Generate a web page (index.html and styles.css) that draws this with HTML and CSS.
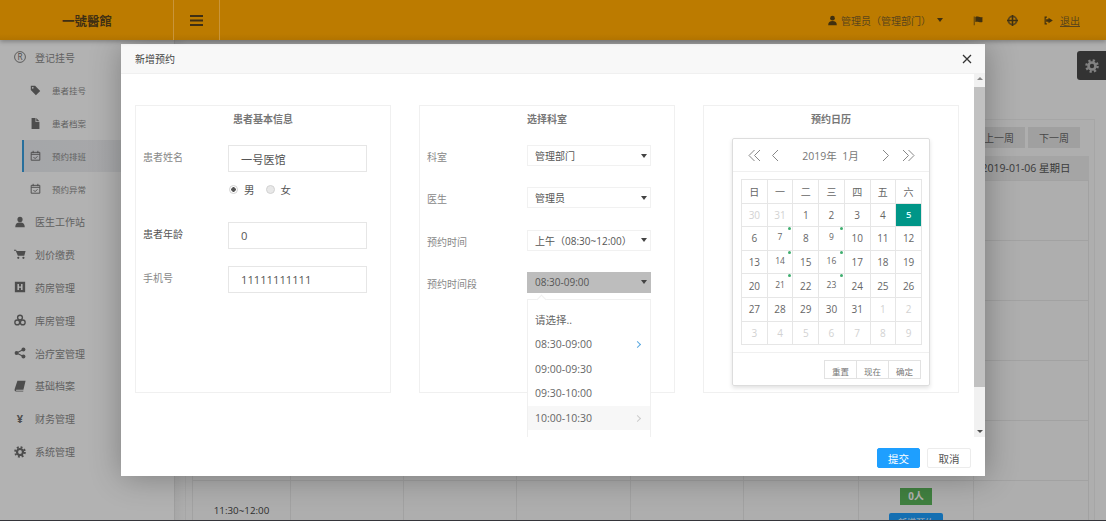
FILE: index.html
```html
<!DOCTYPE html>
<html lang="zh-CN">
<head>
    <meta charset="UTF-8">
    <title>一號醫館</title>
    <link rel="stylesheet" href="styles.css">
</head>
<body>
    <svg class="icon-defs" width="0" height="0">
        <symbol id="i-tag" viewBox="0 0 14 14"><path fill-rule="evenodd" d="M1 1h5.500L13 7.500 7.500 13 1 6.500zM3.500 2.500a1 1 0 1 0 .01 0z"/></symbol>
        <symbol id="i-file" viewBox="0 0 14 14"><path d="M2 0h5v5h5v9H2zM8 0l4 4H8z"/></symbol>
        <symbol id="i-cal" viewBox="0 0 14 14"><path fill="none" stroke="currentColor" stroke-width="1.200" d="M1.500 3h11v10h-11zM1.500 5.500h11M4 1v3M10 1v3M4.500 9l2 2 3-3"/></symbol>
        <symbol id="i-doc" viewBox="0 0 14 14"><circle cx="7" cy="4" r="3"/><path d="M1.500 13c0-4 2-5.500 5.500-5.500s5.500 1.500 5.500 5.500z"/></symbol>
        <symbol id="i-cart" viewBox="0 0 14 14"><path d="M0 2h2.500l.5 1.500h10.500L12 9H4.500L2 3.200H0z"/><circle cx="5" cy="11.500" r="1.300"/><circle cx="11" cy="11.500" r="1.300"/></symbol>
        <symbol id="i-h" viewBox="0 0 14 14"><path fill-rule="evenodd" d="M1 1h12v12H1zM4 3.500v7h1.800V8h2.400v2.500H10v-7H8.200v3H5.800v-3z"/></symbol>
        <symbol id="i-cubes" viewBox="0 0 14 14"><g fill="none" stroke="currentColor" stroke-width="1.600"><circle cx="7" cy="4.200" r="2.800"/><circle cx="3.800" cy="9.800" r="2.800"/><circle cx="10.200" cy="9.800" r="2.800"/></g></symbol>
        <symbol id="i-share" viewBox="0 0 14 14"><circle cx="3" cy="7" r="2.300"/><circle cx="11" cy="3" r="2.300"/><circle cx="11" cy="11" r="2.300"/><path fill="none" stroke="currentColor" stroke-width="1.300" d="M11 3 3 7l8 4"/></symbol>
        <symbol id="i-book" viewBox="0 0 14 14"><path d="M4 1h9.500L11 11.500H2.800c-.8 0-.8 1 0 1H11l-.3 1H2.500C.8 13.500.4 12 .8 10.500z"/></symbol>
        <symbol id="i-gear" viewBox="0 0 14 14"><circle cx="7" cy="7" r="3.500" fill="none" stroke="currentColor" stroke-width="2.600"/><circle cx="7" cy="7" r="5.600" fill="none" stroke="currentColor" stroke-width="2.400" stroke-dasharray="2.200 2.200"/></symbol>
    </svg>

    <div class="app">
        <header class="topbar">
            <div class="brand">一號醫館</div>
            <div class="menu-toggle">
                <svg width="13" height="11" viewBox="0 0 13 11"><path d="M0 0h13v2H0zM0 4.500h13v2H0zM0 9h13v2H0z"/></svg>
            </div>
            <nav class="top-links">
                <span class="top-user">
                    <svg class="top-icon" viewBox="0 0 14 14"><use href="#i-doc"/></svg>
                    管理员（管理部门）
                    <i class="caret"></i>
                </span>
                <span class="top-flag"><svg class="top-icon" viewBox="0 0 14 14"><path d="M1 2h1v11H1zM3 2.500c3-1.500 5 1 9 0V9c-4 1-6-1.500-9 0z"/></svg></span>
                <span class="top-help"><svg class="top-icon" viewBox="0 0 14 14"><circle cx="7" cy="7" r="5.200" fill="none" stroke="currentColor" stroke-width="2.400"/><path d="M6 0h2v14H6zM0 6h14v2H0z"/></svg></span>
                <span class="top-exit">
                    <svg class="top-icon" viewBox="0 0 14 14"><path d="M5 2H2v10h3v-1.500H3.500v-7H5zM7 3.500 12.500 7 7 10.500V8.500H4v-3h3z"/></svg>
                    <u>退出</u>
                </span>
            </nav>
        </header>

        <div class="workspace">
            <aside class="sidebar">
                <div class="nav-item"><svg class="nav-icon" viewBox="0 0 14 14"><circle cx="7" cy="7" r="6.300" fill="none" stroke="currentColor"/><text x="7" y="10.300" text-anchor="middle" font-size="9.500" fill="currentColor">R</text></svg>登记挂号</div>
                <div class="nav-sub"><svg class="nav-icon"><use href="#i-tag"/></svg>患者挂号</div>
                <div class="nav-sub"><svg class="nav-icon"><use href="#i-file"/></svg>患者档案</div>
                <div class="nav-sub active"><svg class="nav-icon"><use href="#i-cal"/></svg>预约排班</div>
                <div class="nav-sub"><svg class="nav-icon"><use href="#i-cal"/></svg>预约异常</div>
                <div class="nav-item"><svg class="nav-icon"><use href="#i-doc"/></svg>医生工作站</div>
                <div class="nav-item"><svg class="nav-icon"><use href="#i-cart"/></svg>划价缴费</div>
                <div class="nav-item"><svg class="nav-icon"><use href="#i-h"/></svg>药房管理</div>
                <div class="nav-item"><svg class="nav-icon"><use href="#i-cubes"/></svg>库房管理</div>
                <div class="nav-item"><svg class="nav-icon"><use href="#i-share"/></svg>治疗室管理</div>
                <div class="nav-item"><svg class="nav-icon"><use href="#i-book"/></svg>基础档案</div>
                <div class="nav-item"><span class="nav-icon yen">¥</span>财务管理</div>
                <div class="nav-item"><svg class="nav-icon"><use href="#i-gear"/></svg>系统管理</div>
            </aside>

            <main class="content">
                <div class="panel">
                    <div class="week-btns">
                        <span class="week-btn">上一周</span>
                        <span class="week-btn">下一周</span>
                    </div>
                    <table class="schedule">
                        <colgroup>
                            <col class="col-time"><col class="col-a"><col class="col-a"><col class="col-b"><col class="col-a"><col class="col-c"><col class="col-c"><col class="col-c">
                        </colgroup>
                        <thead>
                            <tr><th>时间</th><th>2018-12-31 星期一</th><th>2019-01-01 星期二</th><th>2019-01-02 星期三</th><th>2019-01-03 星期四</th><th>2019-01-04 星期五</th><th>2019-01-05 星期六</th><th class="last-day">2019-01-06 星期日</th></tr>
                        </thead>
                        <tbody>
                            <tr><td>09:00~09:30</td><td></td><td></td><td></td><td></td><td></td><td></td><td></td></tr>
                            <tr><td>09:30~10:00</td><td></td><td></td><td></td><td></td><td></td><td></td><td></td></tr>
                            <tr><td>10:00~10:30</td><td></td><td></td><td></td><td></td><td></td><td></td><td></td></tr>
                            <tr><td>10:30~11:00</td><td></td><td></td><td></td><td></td><td></td><td></td><td></td></tr>
                            <tr><td>11:00~11:30</td><td></td><td></td><td></td><td></td><td></td><td></td><td></td></tr>
                            <tr><td>11:30~12:00</td><td></td><td></td><td></td><td></td><td></td><td><span class="count">0人</span><span class="book-btn">新增预约</span></td><td></td></tr>
                        </tbody>
                    </table>
                </div>
            </main>
        </div>

        <div class="settings-tab"><svg width="14" height="14"><use href="#i-gear"/></svg></div>
        <div class="shade"></div>

        <section class="modal">
            <div class="modal-head">
                <span>新增预约</span>
                <svg class="modal-close" width="10" height="10" viewBox="0 0 10 10"><path d="M1 1l8 8M9 1 1 9" stroke="#333" stroke-width="1.300"/></svg>
            </div>
            <div class="modal-body">
                <div class="modal-scroll">
                    <div class="card">
                        <h3 class="card-title">患者基本信息</h3>
                        <div class="field">
                            <label class="field-label">患者姓名</label>
                            <div class="text-input">一号医馆</div>
                        </div>
                        <div class="gender">
                            <span class="radio checked"></span><span class="radio-text">男</span>
                            <span class="radio"></span><span class="radio-text">女</span>
                        </div>
                        <div class="field">
                            <label class="field-label strong">患者年龄</label>
                            <div class="text-input">0</div>
                        </div>
                        <div class="field">
                            <label class="field-label">手机号</label>
                            <div class="text-input">11111111111</div>
                        </div>
                    </div>

                    <div class="card">
                        <h3 class="card-title">选择科室</h3>
                        <div class="select-row">
                            <label class="field-label">科室</label>
                            <div class="select">管理部门<i class="caret"></i></div>
                        </div>
                        <div class="select-row">
                            <label class="field-label">医生</label>
                            <div class="select">管理员<i class="caret"></i></div>
                        </div>
                        <div class="select-row">
                            <label class="field-label">预约时间</label>
                            <div class="select">上午（08:30~12:00）<i class="caret"></i></div>
                        </div>
                        <div class="select-row">
                            <label class="field-label">预约时间段</label>
                            <div class="select open">08:30-09:00<i class="caret"></i></div>
                            <ul class="options">
                                <li>请选择..</li>
                                <li class="selected">08:30-09:00<b></b></li>
                                <li>09:00-09:30</li>
                                <li>09:30-10:00</li>
                                <li class="hover">10:00-10:30<b></b></li>
                            </ul>
                        </div>
                    </div>

                    <div class="card">
                        <h3 class="card-title">预约日历</h3>
                        <div class="calendar">
                            <div class="cal-head">
                                <svg class="cal-nav" width="13" height="13" viewBox="0 0 13 13"><path d="M6.500 1 1 6.500 6.500 12M12 1 6.500 6.500 12 12"/></svg>
                                <svg class="cal-nav prev" width="8" height="13" viewBox="0 0 8 13"><path d="M7 1 1.500 6.500 7 12"/></svg>
                                <span class="cal-month">2019年&nbsp;&nbsp;1月</span>
                                <svg class="cal-nav next" width="8" height="13" viewBox="0 0 8 13"><path d="M1 1l5.500 5.500L1 12"/></svg>
                                <svg class="cal-nav" width="13" height="13" viewBox="0 0 13 13"><path d="M1 1l5.500 5.500L1 12M6.500 1 12 6.500 6.500 12"/></svg>
                            </div>
                            <table class="cal-grid">
                                <thead><tr><th>日</th><th>一</th><th>二</th><th>三</th><th>四</th><th>五</th><th>六</th></tr></thead>
                                <tbody>
                                    <tr><td class="off">30</td><td class="off">31</td><td>1</td><td>2</td><td>3</td><td>4</td><td class="today">5</td></tr>
                                    <tr><td>6</td><td class="mark"><span>7</span></td><td>8</td><td class="mark"><span>9</span></td><td>10</td><td>11</td><td>12</td></tr>
                                    <tr><td>13</td><td class="mark"><span>14</span></td><td>15</td><td class="mark"><span>16</span></td><td>17</td><td>18</td><td>19</td></tr>
                                    <tr><td>20</td><td class="mark"><span>21</span></td><td>22</td><td class="mark"><span>23</span></td><td>24</td><td>25</td><td>26</td></tr>
                                    <tr><td>27</td><td>28</td><td>29</td><td>30</td><td>31</td><td class="off">1</td><td class="off">2</td></tr>
                                    <tr><td class="off">3</td><td class="off">4</td><td class="off">5</td><td class="off">6</td><td class="off">7</td><td class="off">8</td><td class="off">9</td></tr>
                                </tbody>
                            </table>
                            <div class="cal-foot">
                                <span class="cal-btn">重置</span><span class="cal-btn">现在</span><span class="cal-btn">确定</span>
                            </div>
                        </div>
                    </div>
                </div>
                <div class="scrollbar">
                    <i class="scroll-up"></i>
                    <div class="scroll-thumb"></div>
                    <i class="scroll-down"></i>
                </div>
            </div>
            <div class="modal-foot">
                <span class="btn btn-primary">提交</span>
                <span class="btn">取消</span>
            </div>
        </section>
    </div>
</body>
</html>
```

FILE: styles.css
```css
* {
    box-sizing: border-box;
}

html, body {
    margin: 0;
    height: 521px;
    overflow: hidden;
    background-color: #35353a;
}

body {
    font-family: "Open Sans", "Noto Sans CJK SC", sans-serif;
    font-size: 11px;
    color: #555;
}

.icon-defs {
    position: absolute;
}

.app {
    position: relative;
    height: 520px;
    overflow: hidden;
    background-color: #f7f7f9;
}

/* top bar */
.topbar {
    position: relative;
    z-index: 3;
    display: flex;
    align-items: center;
    height: 40px;
    background: linear-gradient(#bc7b00 85%, #b27400);
    color: #5a451c;
    box-shadow: 0 2px 4px rgba(0, 0, 0, 0.25);
}

.brand {
    width: 173px;
    padding-left: 62px;
    font-size: 12.5px;
    font-weight: 700;
    color: #3f2f14;
}

.menu-toggle {
    display: flex;
    align-items: center;
    justify-content: center;
    width: 47px;
    height: 40px;
    border-left: 1px solid #c9953a;
    border-right: 1px solid #c9953a;
}

.menu-toggle svg {
    fill: #3f2f14;
}

.top-links {
    display: flex;
    align-items: center;
    margin-left: auto;
    padding-right: 26px;
    font-size: 10px;
}

.top-links span {
    display: flex;
    align-items: center;
}

.top-icon {
    width: 11px;
    height: 11px;
    fill: #40300f;
}

.top-user .top-icon {
    margin-right: 3px;
}

.top-user .caret {
    margin-left: 6px;
    border-top-color: #40300f;
}

.top-flag {
    margin-left: 30px;
}

.top-help {
    margin-left: 23px;
}

.top-exit {
    margin-left: 25px;
}

.top-exit .top-icon {
    margin-right: 6px;
}

.caret {
    display: inline-block;
    width: 0;
    height: 0;
    border: 3.5px solid transparent;
    border-top: 4px solid #444;
    border-bottom: 0;
}

/* page behind the dialog */
.workspace {
    display: flex;
    height: 480px;
}

.sidebar {
    flex: none;
    width: 175px;
    padding-top: 1px;
    background-color: #fff;
    border-right: 1px solid #e4e4e4;
    color: #8c8c8c;
}

.nav-item, .nav-sub {
    display: flex;
    align-items: center;
    height: 32.85px;
    font-size: 10px;
}

.nav-item {
    padding-left: 14px;
}

.nav-item .nav-icon {
    width: 12px;
    height: 12px;
    margin-right: 9px;
    color: #6f6f6f;
}

.nav-sub {
    margin-left: 24px;
    padding-left: 6px;
    font-size: 8.5px;
}

.nav-sub .nav-icon {
    margin-right: 11px;
    color: #6f6f6f;
}

.nav-sub.active {
    position: relative;
    background: linear-gradient(90deg, #eceef2, #f2f3f5);
}

.nav-sub.active::before {
    content: "";
    position: absolute;
    left: -2px;
    top: 0;
    bottom: 0;
    width: 2px;
    background-color: #3a9fe0;
}

.nav-icon {
    flex: none;
    width: 11px;
    height: 11px;
    fill: currentColor;
}

.yen {
    font-size: 11px;
    font-weight: 700;
    line-height: 12px;
    text-align: center;
}

.content {
    flex: 1;
    min-width: 0;
    padding: 79px 11px 0 10px;
    background-color: #f8f8f8;
    background-image: linear-gradient(90deg, #f0f0f0 0, #fbfbfb 12px);
}

.panel {
    height: 500px;
    padding: 7px 6px 0;
    border: 1px solid #eeeeee;
    background-color: #fafafa;
}

.week-btns {
    display: flex;
    justify-content: flex-end;
    gap: 3px;
    margin-right: 8px;
    margin-bottom: 8px;
}

.week-btn {
    display: flex;
    align-items: center;
    justify-content: center;
    width: 52px;
    height: 21px;
    background-color: #e6e6e6;
    color: #666;
    font-size: 10px;
}

.schedule {
    width: 896px;
    table-layout: fixed;
    border-collapse: collapse;
}

.col-time { width: 98px; }
.col-a { width: 113px; }
.col-b { width: 114px; }
.col-c { width: 115px; }

.schedule th {
    height: 24px;
    background-color: #ececec;
    font-size: 10.5px;
    font-weight: 400;
    color: #555;
    white-space: nowrap;
}

.schedule th.last-day {
    padding-left: 8px;
    text-align: left;
}

.schedule td {
    height: 60px;
    border: 1px solid #e9e9e9;
    text-align: center;
    font-size: 9.8px;
    color: #444;
}

.count {
    display: block;
    width: 32px;
    height: 17px;
    margin: 0 auto 8px;
    background-color: #5cb85c;
    color: #fff;
    font-weight: 700;
    line-height: 17px;
}

.book-btn {
    display: block;
    width: 54px;
    height: 20px;
    margin: 0 auto;
    background-color: #1e9fff;
    border-radius: 2px;
    color: #fff;
    font-size: 9px;
    line-height: 20px;
}

.settings-tab {
    position: absolute;
    top: 51px;
    right: 0;
    display: flex;
    align-items: center;
    justify-content: center;
    width: 29px;
    height: 29px;
    background-color: #4a4a4a;
    border-radius: 3px 0 0 3px;
    color: #bbb;
    fill: #bbb;
}

.shade {
    position: absolute;
    inset: 40px 0 0;
    background-color: rgba(0, 0, 0, 0.3);
}

/* dialog */
.modal {
    position: absolute;
    left: 121px;
    top: 44px;
    display: flex;
    flex-direction: column;
    width: 864px;
    height: 432px;
    background-color: #fff;
    box-shadow: 1px 1px 30px rgba(0, 0, 0, 0.3);
}

.modal-head {
    display: flex;
    align-items: center;
    justify-content: space-between;
    flex: none;
    height: 30px;
    padding: 0 13px 0 14px;
    background-color: #f8f8f8;
    border-bottom: 1px solid #f0f0f0;
    font-size: 10px;
    color: #444;
}

.modal-body {
    display: flex;
    flex: none;
    height: 363px;
}

.modal-scroll {
    display: flex;
    flex: 1;
    gap: 28px;
    align-items: flex-start;
    padding: 31px 0 0 14px;
    overflow: hidden;
}

.card {
    flex: none;
    width: 256px;
    height: 288px;
    padding: 0 7px;
    border: 1px solid #f0f0f0;
}

.card-title {
    height: 26px;
    margin: 0 0 13px;
    font-size: 10px;
    font-weight: 700;
    line-height: 26px;
    text-align: center;
    color: #777;
}

.field-label {
    display: block;
    font-size: 10px;
    color: #888;
}

.field-label.strong {
    color: #555;
}

.field {
    display: flex;
    align-items: center;
    margin-bottom: 17px;
}

.field .field-label {
    width: 85px;
    margin-top: -4px;
}

.text-input {
    display: flex;
    align-items: center;
    width: 139px;
    height: 27px;
    padding-left: 12px;
    border: 1px solid #e6e6e6;
    font-size: 11.2px;
    color: #555;
}

.gender {
    display: flex;
    align-items: center;
    height: 18px;
    margin: -9px 0 24px 85px;
}

.radio {
    width: 9px;
    height: 9px;
    margin-left: 1px;
    border: 1px solid #d2d2d2;
    border-radius: 50%;
    background-color: #e8e8e8;
}

.radio.checked {
    background-color: #fff;
    background-image: radial-gradient(circle, #555 2px, #fff 2.500px);
}

.radio-text {
    margin: 0 10px 0 6px;
    font-size: 10.5px;
    color: #555;
}

.select-row {
    position: relative;
    display: flex;
    height: 21px;
    margin-bottom: 21.3px;
}

.select-row .field-label {
    width: 100px;
    padding-top: 5px;
    line-height: 15px;
}

.select {
    display: flex;
    align-items: center;
    justify-content: space-between;
    width: 124px;
    height: 21px;
    padding: 0 3px 0 7px;
    border: 1px solid #f1f1f1;
    font-size: 10px;
    color: #555;
    white-space: nowrap;
}

.select.open {
    background-color: #bdbdbd;
    border-color: #bdbdbd;
    color: #555;
}

.options {
    position: absolute;
    z-index: 1;
    left: 100px;
    top: 27px;
    width: 124px;
    height: 160px;
    margin: 0;
    padding: 8px 0 0;
    list-style: none;
    background-color: #fff;
    border: 1px solid #f0f0f0;
}

.options::before {
    content: "";
    position: absolute;
    left: 10px;
    top: -4px;
    width: 6px;
    height: 6px;
    background-color: #fff;
    border-left: 1px solid #f0f0f0;
    border-top: 1px solid #f0f0f0;
    transform: rotate(45deg);
}

.options li {
    position: relative;
    height: 24.5px;
    padding-left: 7px;
    font-size: 10.5px;
    line-height: 24.5px;
    color: #666;
}

.options li.hover {
    background-color: #f7f7f7;
}

.options li b {
    position: absolute;
    right: 10px;
    top: 10px;
    width: 5px;
    height: 5px;
    border-top: 1px solid #ccc;
    border-right: 1px solid #ccc;
    transform: rotate(45deg);
}

.options li.selected b {
    border-color: #5aa9e0;
}

.calendar {
    width: 198px;
    height: 248px;
    margin: -7px auto 0 21px;
    border: 1px solid #ddd;
    border-radius: 2px;
    box-shadow: 0 2px 4px rgba(0, 0, 0, 0.12);
}

.cal-head {
    display: flex;
    align-items: center;
    height: 33px;
    padding: 0 14px 0 15px;
    border-bottom: 1px solid #f0f0f0;
}

.cal-nav {
    fill: none;
    stroke: #888;
    stroke-width: 1;
}

.cal-nav.prev {
    margin-left: 10px;
}

.cal-nav.next {
    margin-right: 12px;
}

.cal-month {
    flex: 1;
    font-size: 10.5px;
    text-align: center;
    color: #777;
}

.cal-grid {
    width: 181px;
    margin: 7px 0 0 8px;
    table-layout: fixed;
    border-collapse: collapse;
}

.cal-grid th, .cal-grid td {
    height: 23.6px;
    padding: 0;
    border: 1px solid #e6e6e6;
    font-size: 10px;
    font-weight: 400;
    text-align: center;
    color: #666;
}

.cal-grid td.off {
    color: #d2d2d2;
}

.cal-grid td.today {
    background-color: #009688;
    color: #dff;
    font-size: 9.5px;
    font-weight: 600;
}

.cal-grid td.mark {
    position: relative;
}

.cal-grid td.mark span {
    display: block;
    margin-top: -3px;
    font-size: 8.5px;
}

.cal-grid td.mark::after {
    content: "";
    position: absolute;
    right: 1px;
    top: 0;
    width: 3px;
    height: 3px;
    border-radius: 50%;
    background-color: #3fae6f;
}

.cal-foot {
    display: flex;
    justify-content: flex-end;
    height: 34px;
    margin-top: 7px;
    padding: 7px 8px 0 0;
    border-top: 1px solid #f0f0f0;
}

.cal-btn {
    display: flex;
    align-items: flex-end;
    justify-content: center;
    width: 33px;
    height: 19px;
    margin-left: -1px;
    padding-bottom: 1px;
    border: 1px solid #e2e2e2;
    font-size: 8.5px;
    color: #777;
}

.scrollbar {
    display: flex;
    flex: none;
    flex-direction: column;
    width: 11px;
    background-color: #f1f1f1;
}

.scroll-up, .scroll-down {
    display: block;
    align-self: center;
    width: 0;
    height: 0;
    border: 3px solid transparent;
}

.scroll-up {
    margin-top: 3px;
    border-top: 0;
    border-bottom: 3px solid #888;
}

.scroll-down {
    margin-top: auto;
    margin-bottom: 4px;
    border-bottom: 0;
    border-top: 3px solid #505050;
}

.scroll-thumb {
    height: 300px;
    margin-top: 7px;
    background-color: #c1c1c1;
}

.modal-foot {
    display: flex;
    justify-content: flex-end;
    gap: 7px;
    padding: 11px 14px 0 0;
}

.btn {
    display: flex;
    align-items: center;
    justify-content: center;
    width: 44px;
    height: 20px;
    border: 1px solid #ececec;
    border-radius: 2px;
    background-color: #fff;
    font-size: 10.5px;
    color: #555;
}

.btn-primary {
    width: 43px;
    background-color: #1e9fff;
    border-color: #1e9fff;
    color: #fff;
}
```
